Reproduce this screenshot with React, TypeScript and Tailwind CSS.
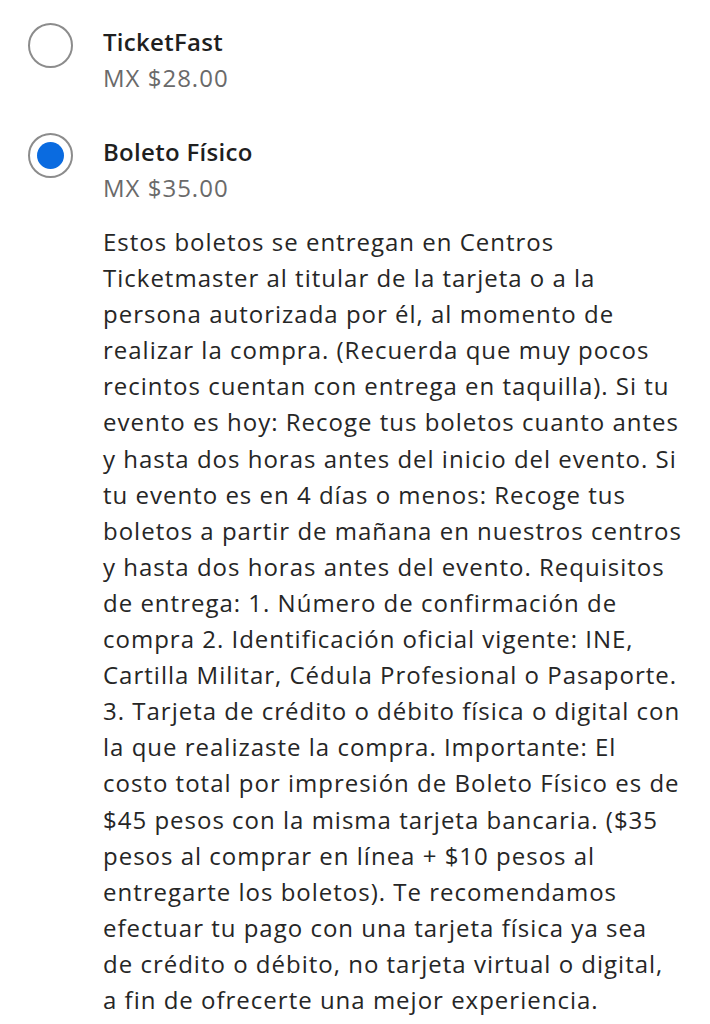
const lines = [
  "Estos boletos se entregan en Centros",
  "Ticketmaster al titular de la tarjeta o a la",
  "persona autorizada por él, al momento de",
  "realizar la compra. (Recuerda que muy pocos",
  "recintos cuentan con entrega en taquilla). Si tu",
  "evento es hoy: Recoge tus boletos cuanto antes",
  "y hasta dos horas antes del inicio del evento. Si",
  "tu evento es en 4 días o menos: Recoge tus",
  "boletos a partir de mañana en nuestros centros",
  "y hasta dos horas antes del evento. Requisitos",
  "de entrega: 1. Número de confirmación de",
  "compra 2. Identificación oficial vigente: INE,",
  "Cartilla Militar, Cédula Profesional o Pasaporte.",
  "3. Tarjeta de crédito o débito física o digital con",
  "la que realizaste la compra. Importante: El",
  "costo total por impresión de Boleto Físico es de",
  "$45 pesos con la misma tarjeta bancaria. ($35",
  "pesos al comprar en línea + $10 pesos al",
  "entregarte los boletos). Te recomendamos",
  "efectuar tu pago con una tarjeta física ya sea",
  "de crédito o débito, no tarjeta virtual o digital,",
  "a fin de ofrecerte una mejor experiencia.",
];

function Radio({ checked }: { checked?: boolean }) {
  return (
    <div className="mt-[-1px] flex h-[45px] w-[45px] shrink-0 items-center justify-center rounded-full border-2 border-[#8c8c8c]">
      {checked && <div className="h-[27px] w-[27px] rounded-full bg-[#0a6be0]" />}
    </div>
  );
}

function Option({ title, price, checked }: { title: string; price: string; checked?: boolean }) {
  return (
    <div className="flex gap-[30px]">
      <Radio checked={checked} />
      <div className="flex flex-col">
        <div className="text-[24px] font-semibold leading-[36px] tracking-[0.3px] text-[#1f1f1f]">{title}</div>
        <div className="text-[24px] leading-[36px] tracking-[1px] text-[#6a6a6a]">{price}</div>
      </div>
    </div>
  );
}

export default function App() {
  return (
    <div className="min-h-[1024px] w-[710px] bg-white pl-[28px] pt-[24px] font-['Open_Sans',sans-serif]">
      <div className="flex flex-col gap-[38px]">
        <Option title="TicketFast" price="MX $28.00" />
        <Option title="Boleto Físico" price="MX $35.00" checked />
      </div>
      <div className="mt-[18px] pl-[75px] text-[24px] leading-[36.1px] tracking-[1px] text-[#262626]">
        {lines.map((l, i) => (
          <div key={i} className="whitespace-nowrap">{l}</div>
        ))}
      </div>
    </div>
  );
}
